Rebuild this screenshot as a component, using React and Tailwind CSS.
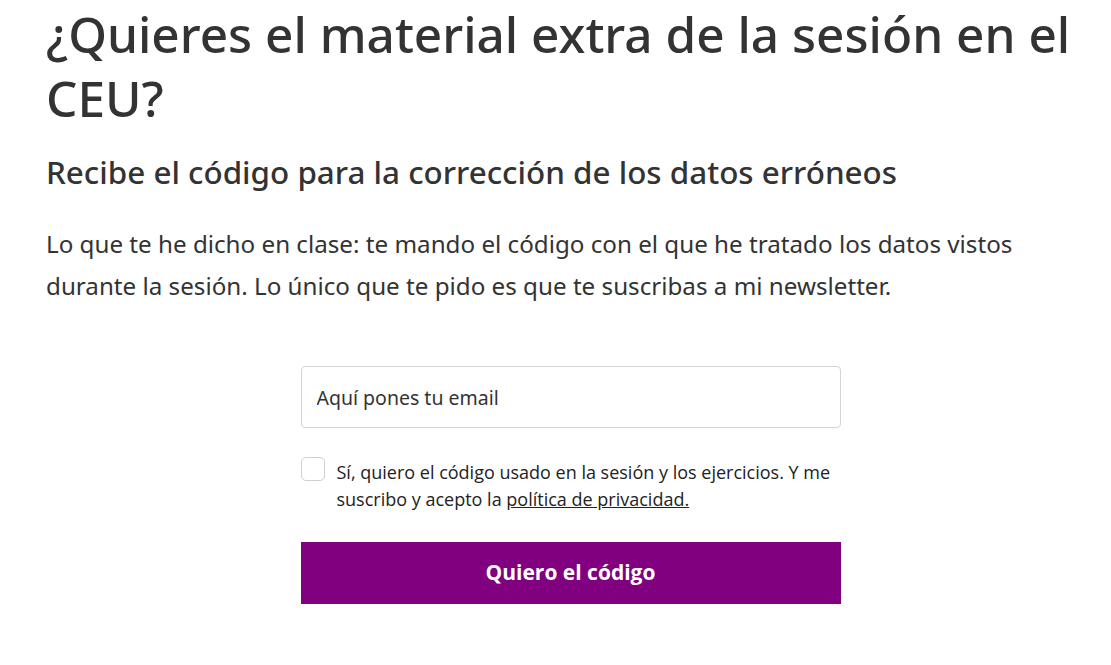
export default function App() {
  return (
    <div className="bg-white min-h-screen text-[#333333]">
      <div className="pl-[46px] pr-[16px] pt-[2px]">
        <h1 className="font-['Noto_Sans',sans-serif] text-[49.5px] leading-[64px] font-medium">
          ¿Quieres el material extra de la sesión en el CEU?
        </h1>
        <h2 className="mt-[22px] font-['Noto_Sans',sans-serif] text-[31.4px] leading-[40px] font-medium">
          Recibe el código para la corrección de los datos erróneos
        </h2>
        <p className="mt-[31px] font-['Noto_Sans',sans-serif] text-[24.2px] leading-[42px]">
          Lo que te he dicho en clase: te mando el código con el que he tratado los datos vistos durante la sesión. Lo único que te pido es que te suscribas a mi newsletter.
        </p>

        <form className="mx-auto mt-[59px] w-[540px]" onSubmit={(e) => e.preventDefault()}>
          <input
            type="email"
            placeholder="Aquí pones tu email"
            className="w-full h-[62px] px-[15px] border border-[#d4d4d4] rounded-[4px] font-['Noto_Sans',sans-serif] text-[19.5px] placeholder:text-[#333333] outline-none"
          />
          <label className="mt-[31px] flex items-start gap-[12px] font-['Open_Sans',sans-serif] text-[18px] leading-[27px] text-[#222222]">
            <span className="mt-[-2px] w-[24px] h-[24px] shrink-0 rounded-[5px] border border-[#cfcfcf] bg-white"></span>
            <span>
              Sí, quiero el código usado en la sesión y los ejercicios. Y me suscribo y acepto la{' '}
              <a href="#" className="underline">política de privacidad.</a>
            </span>
          </label>
          <button
            type="submit"
            className="mt-[29px] w-full h-[62px] bg-[#800080] text-white font-['Open_Sans',sans-serif] font-bold text-[21px]"
          >
            Quiero el código
          </button>
        </form>
      </div>
    </div>
  )
}
